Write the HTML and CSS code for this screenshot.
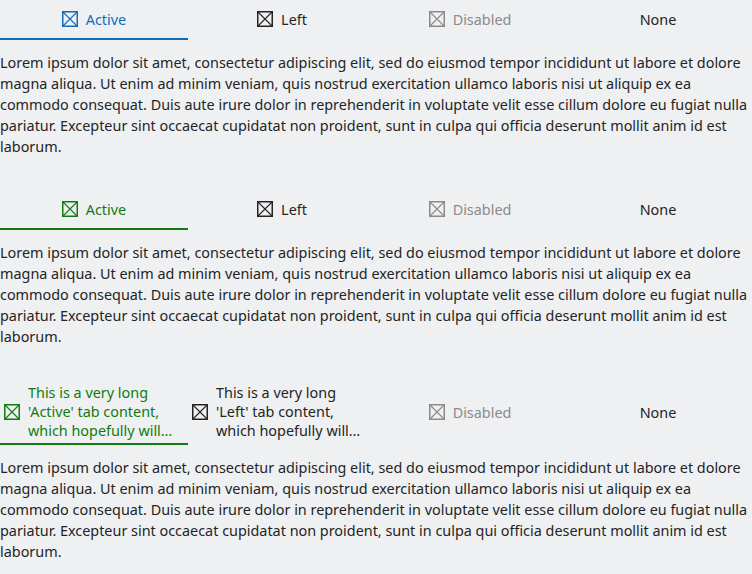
FILE: index.html
```html
<!DOCTYPE html>
<html lang="en">
<head>
<meta charset="utf-8">
<title>Tabs</title>
<link rel="stylesheet" href="styles.css">
</head>
<body>
<svg width="0" height="0" class="defs" aria-hidden="true">
  <defs>
    <symbol id="ico" viewBox="0 0 16 16">
      <rect x="0.75" y="0.75" width="14.5" height="14.5" fill="none" stroke="currentColor" stroke-width="1.5"/>
      <path d="M1 1 L15 15 M15 1 L1 15" fill="none" stroke="currentColor" stroke-width="1.1"/>
    </symbol>
  </defs>
</svg>

<section class="block">
  <div class="tabs">
    <div class="tab active blue"><svg class="icon"><use href="#ico"/></svg><span class="label">Active</span></div>
    <div class="tab"><svg class="icon"><use href="#ico"/></svg><span class="label">Left</span></div>
    <div class="tab disabled"><svg class="icon"><use href="#ico"/></svg><span class="label">Disabled</span></div>
    <div class="tab"><span class="label">None</span></div>
  </div>
  <p class="text">Lorem ipsum dolor sit amet, consectetur adipiscing elit, sed do eiusmod tempor incididunt ut labore et dolore magna aliqua. Ut enim ad minim veniam, quis nostrud exercitation ullamco laboris nisi ut aliquip ex ea commodo consequat. Duis aute irure dolor in reprehenderit in voluptate velit esse cillum dolore eu fugiat nulla pariatur. Excepteur sint occaecat cupidatat non proident, sunt in culpa qui officia deserunt mollit anim id est laborum.</p>
</section>

<section class="block">
  <div class="tabs">
    <div class="tab active green"><svg class="icon"><use href="#ico"/></svg><span class="label">Active</span></div>
    <div class="tab"><svg class="icon"><use href="#ico"/></svg><span class="label">Left</span></div>
    <div class="tab disabled"><svg class="icon"><use href="#ico"/></svg><span class="label">Disabled</span></div>
    <div class="tab"><span class="label">None</span></div>
  </div>
  <p class="text">Lorem ipsum dolor sit amet, consectetur adipiscing elit, sed do eiusmod tempor incididunt ut labore et dolore magna aliqua. Ut enim ad minim veniam, quis nostrud exercitation ullamco laboris nisi ut aliquip ex ea commodo consequat. Duis aute irure dolor in reprehenderit in voluptate velit esse cillum dolore eu fugiat nulla pariatur. Excepteur sint occaecat cupidatat non proident, sunt in culpa qui officia deserunt mollit anim id est laborum.</p>
</section>

<section class="block">
  <div class="tabs">
    <div class="tab active green"><svg class="icon"><use href="#ico"/></svg><span class="label clamp">This is a very long 'Active' tab content, which hopefully will wrap and get truncated</span></div>
    <div class="tab"><svg class="icon"><use href="#ico"/></svg><span class="label clamp">This is a very long 'Left' tab content, which hopefully will wrap and get truncated</span></div>
    <div class="tab disabled"><svg class="icon"><use href="#ico"/></svg><span class="label">Disabled</span></div>
    <div class="tab"><span class="label">None</span></div>
  </div>
  <p class="text">Lorem ipsum dolor sit amet, consectetur adipiscing elit, sed do eiusmod tempor incididunt ut labore et dolore magna aliqua. Ut enim ad minim veniam, quis nostrud exercitation ullamco laboris nisi ut aliquip ex ea commodo consequat. Duis aute irure dolor in reprehenderit in voluptate velit esse cillum dolore eu fugiat nulla pariatur. Excepteur sint occaecat cupidatat non proident, sunt in culpa qui officia deserunt mollit anim id est laborum.</p>
</section>
</body>
</html>
```

FILE: styles.css
```css
html, body {
  margin: 0;
  padding: 0;
}
body {
  background: #eff0f2;
  color: #242424;
  font-family: "Noto Sans", "Open Sans", sans-serif;
  font-size: 14.4px;
}
.defs {
  position: absolute;
  width: 0;
  height: 0;
  overflow: hidden;
}
.tabs {
  display: grid;
  grid-template-columns: repeat(4, 1fr);
}
.tab {
  display: flex;
  align-items: center;
  justify-content: center;
  gap: 8px;
  min-height: 40px;
  box-sizing: border-box;
  padding: 3px 4px 3px 4px;
  border-bottom: 2px solid transparent;
  color: #242424;
  line-height: 19px;
}
.tab.active.blue {
  color: #0f6cbd;
  border-bottom-color: #0f6cbd;
}
.tab.active.green {
  color: #107c10;
  border-bottom-color: #107c10;
}
.tab.disabled {
  color: #8a8a8a;
}
.icon {
  width: 16px;
  height: 16px;
  flex: 0 0 16px;
}
.label {
  min-width: 0;
  padding-top: 1px;
}
.clamp {
  display: -webkit-box;
  -webkit-line-clamp: 3;
  -webkit-box-orient: vertical;
  overflow: hidden;
  text-align: left;
  padding-top: 0;
}
.text {
  margin: 12px 0 33px;
  line-height: 21px;
}
```
